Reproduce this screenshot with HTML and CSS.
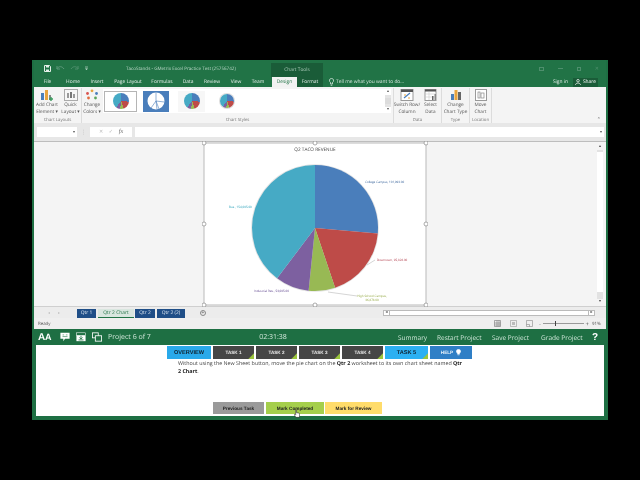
FILE: index.html
```html
<!DOCTYPE html>
<html lang="en">
<head>
<meta charset="utf-8">
<title>GMetrix Excel Practice Test</title>
<link rel="stylesheet" href="styles.css">
</head>
<body>
<div class="app">
  <section class="excel">
    <header class="titlebar">
      <div class="qat">
        <svg class="qat-save" viewBox="0 0 7 7"><path d="M.5.5h5l1 1v5h-6z" fill="none" stroke="#e4efe9"/><path d="M2 .5h3v2H2zM2 4.5h3v2H2z" fill="#e4efe9"/></svg>
        <svg class="qat-icon" viewBox="0 0 9 7"><path d="M1 3.500C3 1 6 1 8 4M1 1v3h3" fill="none" stroke="#5f9a7c"/></svg>
        <svg class="qat-icon" viewBox="0 0 9 7"><path d="M8 3.500C6 1 3 1 1 4M8 1v3H5" fill="none" stroke="#4e8f6d"/></svg>
        <svg class="qat-caret" viewBox="0 0 5 5"><path d="M1 1h3M1 2.500h3L2.500 4z" fill="#cfe3d8" stroke="none"/><path d="M1 1h3" stroke="#cfe3d8" stroke-width=".6"/></svg>
      </div>
      <div class="doc-title">TacoStands - GMetrix Excel Practice Test (25756742)</div>
      <div class="tools-tab">Chart Tools</div>
      <div class="win-controls">
        <span class="win-box"></span>
        <span class="win-min"></span>
        <span class="win-box win-max"></span>
        <span class="win-close">✕</span>
      </div>
    </header>
    <nav class="tabstrip">
      <div class="tabs">
        <span>File</span><span>Home</span><span>Insert</span><span>Page Layout</span><span>Formulas</span><span>Data</span><span>Review</span><span>View</span><span>Team</span><i></i><span class="tab-on">Design</span><span class="tab-format">Format</span>
      </div>
      <svg class="bulb" viewBox="0 0 5 8"><path d="M2.500.5a2 2 0 0 1 1 3.800V6h-2V4.300a2 2 0 0 1 1-3.800zM1.700 7.300h1.600" fill="none" stroke="#e8f1ec" stroke-width=".7"/></svg>
      <span class="tell">Tell me what you want to do...</span>
      <span class="signin">Sign in</span>
      <span class="share"><svg viewBox="0 0 7 7"><circle cx="3.500" cy="2" r="1.500" fill="none" stroke="#fff" stroke-width=".8"/><path d="M.5 7c0-3 6-3 6 0" fill="none" stroke="#fff" stroke-width=".8"/></svg>Share</span>
    </nav>
    <div class="ribbon">
      <div class="group group-layouts">
        <div class="group-body">
          <div class="rb rb-add">
            <svg class="rb-icon" viewBox="0 0 14 12"><rect x="1" y="4" width="3" height="7" fill="#4a7ebb"/><rect x="5" y="1" width="3" height="10" fill="#e8a33d"/><rect x="9" y="6" width="2" height="5" fill="#888"/><path d="M11 8v4M9 10h4" stroke="#3c9a5f" stroke-width="1.400"/></svg>
            <span>Add Chart<br>Element ▾</span>
          </div>
          <div class="rb rb-quick">
            <svg class="rb-icon" viewBox="0 0 14 12"><rect x=".5" y=".5" width="13" height="11" fill="#f7f7f7" stroke="#aaa"/><rect x="3" y="4" width="2" height="5" fill="#999"/><rect x="6" y="3" width="2" height="6" fill="#777"/><rect x="9" y="5" width="2" height="4" fill="#999"/></svg>
            <span>Quick<br>Layout ▾</span>
          </div>
        </div>
        <div class="caption">Chart Layouts</div>
      </div>
      <div class="group group-styles">
        <div class="group-body">
          <div class="rb rb-colors">
            <svg class="rb-icon" viewBox="0 0 14 12"><circle cx="7" cy="1.800" r="1.400" fill="#e8a33d"/><circle cx="2.500" cy="4.500" r="1.400" fill="#d9534f"/><circle cx="11.500" cy="4.500" r="1.400" fill="#4a7ebb"/><circle cx="3.500" cy="9" r="1.400" fill="#e26b3c"/><circle cx="10.500" cy="9" r="1.400" fill="#5ba55b"/></svg>
            <span>Change<br>Colors ▾</span>
          </div>
          <div class="gallery">
            <div class="thumb thumb-selected"><span class="mini-pie"></span></div>
            <div class="thumb thumb-blue">
              <svg viewBox="0 0 26 20"><circle cx="13" cy="10" r="8.500" fill="#fff"/><path d="M13 1.500V10l8.400 1M13 10l-5 7M13 10l1 8.500M13 10l3 8" stroke="#4a7ebb" stroke-width=".6" fill="none"/></svg>
            </div>
            <div class="thumb thumb-soft"><span class="mini-pie"></span></div>
            <div class="thumb thumb-dark"><span class="mini-pie mini-pie-dark"></span></div>
          </div>
          <div class="gallery-scroll"><span>▴</span><span class="gs-mid"></span><span>▾</span></div>
        </div>
        <div class="caption">Chart Styles</div>
      </div>
      <div class="group group-data">
        <div class="group-body">
          <div class="rb rb-switch">
            <svg class="rb-icon" viewBox="0 0 14 12"><rect x="1" y=".5" width="12" height="11" fill="#fff" stroke="#999"/><rect x="1" y=".5" width="12" height="2.500" fill="#555"/><path d="M4 9l6-5" stroke="#4a7ebb" stroke-width="1.200"/><path d="M4 6h2M8 9h2" stroke="#e8a33d"/></svg>
            <span>Switch Row/<br>Column</span>
          </div>
          <div class="rb rb-select">
            <svg class="rb-icon" viewBox="0 0 14 12"><rect x="1" y=".5" width="11" height="11" fill="#fff" stroke="#999"/><rect x="1" y=".5" width="11" height="2" fill="#555"/><path d="M1 5h11M1 8h11M5 3v8" stroke="#c9c9c9" stroke-width=".6"/><rect x="8" y="7" width="1.500" height="4" fill="#666"/><rect x="10.500" y="5" width="1.500" height="6" fill="#888"/></svg>
            <span>Select<br>Data</span>
          </div>
        </div>
        <div class="caption">Data</div>
      </div>
      <div class="group group-type">
        <div class="group-body">
          <div class="rb rb-type">
            <svg class="rb-icon" viewBox="0 0 14 12"><rect x="2" y="5" width="3" height="6" fill="#4a7ebb"/><rect x="5.500" y="1" width="3" height="10" fill="#e8a33d"/><rect x="9" y="3" width="3" height="8" fill="#666"/></svg>
            <span>Change<br>Chart Type</span>
          </div>
        </div>
        <div class="caption">Type</div>
      </div>
      <div class="group group-loc">
        <div class="group-body">
          <div class="rb rb-move">
            <svg class="rb-icon" viewBox="0 0 14 12"><rect x="1.500" y=".5" width="11" height="11" fill="#fff" stroke="#999"/><rect x="4" y="3" width="2" height="6" fill="none" stroke="#888" stroke-width=".7"/><rect x="7" y="4" width="3" height="5" fill="none" stroke="#888" stroke-width=".7"/></svg>
            <span>Move<br>Chart</span>
          </div>
        </div>
        <div class="caption">Location</div>
      </div>
      <span class="collapse">⌃</span>
    </div>
    <div class="formula">
      <div class="namebox"><span>▾</span></div>
      <span class="fdots">⋮</span>
      <div class="fbuttons"><span>✕</span><span>✓</span><em>fx</em></div>
      <div class="finput"><span>▾</span></div>
    </div>
    <div class="sheet">
      <svg class="chart" viewBox="0 0 226 166">
        <rect x="2" y="2" width="222" height="162" fill="#fff" stroke="#b9b9b9"/>
        <text class="chart-title" x="113" y="10" text-anchor="middle">Q2 TACO REVENUE</text>
        <circle cx="113" cy="87" r="63.800" fill="#e3e3e3"/>
        <path d="M113 87V24A63 63 0 0 1 175.800 92.500Z" fill="#4a7ebb"/>
        <path d="M113 87L175.800 92.500A63 63 0 0 1 133.100 146.700Z" fill="#be4b48"/>
        <path d="M113 87L133.100 146.700A63 63 0 0 1 106.600 149.700Z" fill="#98b954"/>
        <path d="M113 87L106.600 149.700A63 63 0 0 1 75.100 137.300Z" fill="#7d60a0"/>
        <path d="M113 87L75.100 137.300A63 63 0 0 1 113 24Z" fill="#46aac5"/>
        <path class="leader" d="M173 119L165 124"/>
        <path class="leader" d="M126 151L155 155"/>
        <text class="lbl lbl-blue" x="163" y="42">College Campus, 101,993.00</text>
        <text class="lbl lbl-red" x="175" y="120">Downtown, 95,828.00</text>
        <text class="lbl lbl-green" x="170" y="156" text-anchor="middle">High School Campus,</text>
        <text class="lbl lbl-green" x="170" y="160" text-anchor="middle">36,878.00</text>
        <text class="lbl lbl-purple" x="52" y="151">Industrial Rev., 53,695.00</text>
        <text class="lbl lbl-teal" x="27" y="67">Bus., 154,095.00</text>
        <g class="handles">
          <circle cx="2" cy="2" r="2"/><circle cx="113" cy="2" r="2"/><circle cx="224" cy="2" r="2"/>
          <circle cx="2" cy="83" r="2"/><circle cx="224" cy="83" r="2"/>
          <circle cx="2" cy="164" r="2"/><circle cx="113" cy="164" r="2"/><circle cx="224" cy="164" r="2"/>
        </g>
      </svg>
      <div class="vscroll"><span class="sb-btn">▴</span><span class="sb-thumb"></span><span class="sb-btn">▾</span></div>
    </div>
    <div class="sheet-tabs">
      <div class="tab-nav"><span>◂</span><span>▸</span></div>
      <span class="stab stab-q1">Qtr 1</span>
      <span class="stab stab-active">Qtr 2 Chart</span>
      <span class="stab stab-q2">Qtr 2</span>
      <span class="stab stab-q22">Qtr 2 (2)</span>
      <span class="add-sheet">+</span>
      <div class="hscroll"><span>◂</span><span class="hs-track"></span><span>▸</span></div>
    </div>
    <footer class="status">
      <span class="ready">Ready</span>
      <div class="views">
        <svg viewBox="0 0 7 7"><path d="M.5.5h6v6h-6zM.5 3h6M.5 5h6M3 .5v6M5 .5v6" fill="none" stroke="#777" stroke-width=".6"/></svg>
        <svg viewBox="0 0 7 7"><path d="M.5.5h6v6h-6z" fill="none" stroke="#999" stroke-width=".6"/><path d="M2 2h3v3H2z" fill="#bbb"/></svg>
        <svg viewBox="0 0 7 7"><path d="M.5.5h6v6h-6zM.5 4.500h3v2" fill="none" stroke="#888" stroke-width=".6"/></svg>
      </div>
      <div class="zoom-slider"><span class="z-sign">-</span><span class="z-track"><b></b></span><span class="z-sign">+</span></div>
      <span class="zoom-pct">91%</span>
    </footer>
  </section>
  <section class="bar">
    <span class="aa">A<small>A</small></span>
    <svg class="bar-icon bar-icon-first" viewBox="0 0 12 11"><path d="M.5.5h11v7H6l-2 3v-3H.5z" fill="#fff"/><path d="M3 3h2M7 3h2M3 5h6" stroke="#217346" stroke-width=".7"/></svg>
    <svg class="bar-icon" viewBox="0 0 12 11"><rect x=".5" y=".5" width="11" height="10" fill="#fff"/><rect x=".5" y=".5" width="11" height="3" fill="#217346" stroke="#fff" stroke-width=".5"/><path d="M6 4v4M4 6l2 2 2-2M3 9h6" fill="none" stroke="#217346"/></svg>
    <svg class="bar-icon" viewBox="0 0 12 11"><rect x=".5" y=".5" width="7" height="6" fill="none" stroke="#fff"/><rect x="4" y="4" width="7.500" height="6.500" fill="#217346" stroke="#fff"/></svg>
    <span class="progress">Project 6 of 7</span>
    <span class="timer">02:31:38</span>
    <span class="link link-summary">Summary</span>
    <span class="link link-restart">Restart Project</span>
    <span class="link link-save">Save Project</span>
    <span class="link link-grade">Grade Project</span>
    <span class="help-q">?</span>
  </section>
  <main class="panel">
    <div class="task-tabs">
      <span class="ttab ttab-over">OVERVIEW</span>
      <span class="ttab ttab-task">TASK 1<i></i></span>
      <span class="ttab ttab-task">TASK 2<i></i></span>
      <span class="ttab ttab-task">TASK 3<i></i></span>
      <span class="ttab ttab-task">TASK 4<i></i></span>
      <span class="ttab ttab-cur">TASK 5<i></i></span>
      <span class="ttab ttab-help">HELP
        <svg viewBox="0 0 6 8"><path d="M3 0a2.500 2.500 0 0 1 1.300 4.700V6H1.700V4.700A2.500 2.500 0 0 1 3 0zM1.900 7h2.200" fill="#fff" stroke="#fff" stroke-width=".5"/></svg>
      </span>
    </div>
    <p class="instructions">Without using the New Sheet button, move the pie chart on the <b>Qtr 2</b> worksheet to its own chart sheet named <b>Qtr 2 Chart</b>.</p>
    <div class="actions">
      <span class="act act-prev">Previous Task</span>
      <span class="act act-done">Mark Completed
        <svg class="cursor" viewBox="0 0 7 10"><path d="M2 .5c.6 0 1 .4 1 1V4l2.500.5c.7.2 1 .6 1 1.200V9.500H2L.5 6.500c-.2-.5.3-.9.8-.5l.7.700z" fill="#fff" stroke="#111" stroke-width=".6"/></svg>
      </span>
      <span class="act act-review">Mark for Review</span>
    </div>
  </main>
</div>
</body>
</html>
```

FILE: styles.css
```css
* { box-sizing: border-box; }
html, body { margin: 0; height: 100%; background: #000; }
body { font-family: "Open Sans", "Liberation Sans", sans-serif; color: #444; overflow: hidden; text-rendering: geometricPrecision; }

.app {
  margin: 60px 0 0 32px;
  width: 576px;
  height: 360px;
  padding: 0 1px 4px 2px;
  background: #1e6f43;
  display: flex;
  flex-direction: column;
  filter: blur(.4px);
}

.excel { height: 269px; margin-right: 1px; display: flex; flex-direction: column; background: #f2f2f2; }

/* title */
.titlebar { height: 17px; flex: none; display: flex; align-items: center; background: #217346; position: relative; }
.qat { width: 92px; padding-left: 10px; display: flex; align-items: center; gap: 5px; }
.qat-save { width: 7px; height: 7px; }
.qat-icon { width: 9px; height: 7px; }
.qat-caret { width: 5px; height: 5px; }
.doc-title { width: 111px; font-size: 4.550px; white-space: nowrap; color: #bcd7c8; }
.tools-tab { margin-left: 34px; width: 52px; align-self: flex-end; height: 14px; background: #1a5c38; color: #a9c9b7; font-size: 4.800px; display: flex; align-items: center; justify-content: center; }
.win-controls { margin-left: auto; margin-right: 7px; display: flex; align-items: center; gap: 14px; }
.win-box { width: 5px; height: 4px; border: 1px solid #4e8f6d; }
.win-min { width: 5px; height: 1px; background: #4e8f6d; }
.win-max { width: 4px; height: 4px; }
.win-close { font-size: 5px; color: #4e8f6d; }

/* tabs */
.tabstrip { height: 10px; flex: none; display: flex; align-items: center; background: #217346; color: #e8f1ec; font-size: 4.900px; }
.tabs { display: grid; grid-template-columns: 25px 26px 22px 40px 28px 24px 24px 24px 20px 4px 25px 26px; height: 100%; padding-left: 1px; }
.tabs span { display: flex; align-items: center; justify-content: center; white-space: nowrap; }
.tabs .tab-on { background: #f2f2f2; color: #217346; }
.tabs .tab-format { background: #1a5c38; }
.bulb { width: 5px; height: 8px; margin-left: 6px; }
.tell { margin-left: 2px; white-space: nowrap; color: #d5e5dc; }
.signin { margin-left: auto; white-space: nowrap; }
.share { width: 25px; height: 9px; margin: 0 8px 0 5px; background: #1a5c38; display: flex; align-items: center; justify-content: center; gap: 2px; color: #fff; }
.share svg { width: 6px; height: 6px; }

/* ribbon */
.ribbon { height: 36px; flex: none; display: flex; background: #f4f4f4; position: relative; color: #555; font-size: 4.700px; }
.group { display: flex; flex-direction: column; border-right: 1px solid #dcdcdc; margin-top: 1px; }
.group-body { flex: 1; display: flex; min-height: 0; }
.caption { height: 6px; line-height: 6px; text-align: center; font-size: 4.300px; color: #777; white-space: nowrap; }
.group-layouts { width: 48px; }
.group-styles { width: 312px; }
.group-data { width: 48px; }
.group-type { width: 28px; }
.group-loc { width: 22px; }
.rb { display: flex; flex-direction: column; align-items: center; text-align: center; line-height: 6.600px; white-space: nowrap; padding-top: 1px; }
.rb span { display: block; margin-top: 1px; }
.rb-icon { width: 14px; height: 12px; flex: none; }
.rb-add { width: 26px; }
.rb-quick { width: 21px; }
.rb-colors { width: 20px; }
.rb-switch { width: 26px; }
.rb-select { width: 21px; }
.rb-type { width: 27px; }
.rb-move { width: 21px; }
.gallery { width: 282px; height: 24px; margin-left: 1px; padding-left: 1px; margin-top: 1px; background: #fff; display: flex; align-items: center; }
.thumb { height: 21px; display: flex; align-items: center; justify-content: center; flex: none; }
.thumb-selected { width: 33px; border: 1px solid #b5b5b5; background: #fff; }
.thumb-blue { width: 26px; margin-left: 6px; background: #4a7ebb; }
.thumb-blue svg { width: 26px; height: 20px; }
.thumb-soft { width: 27px; margin-left: 9px; background: #f7f7f7; }
.thumb-dark { width: 26px; margin-left: 9px; }
.mini-pie { display: block; width: 16px; height: 16px; border-radius: 50%; background: conic-gradient(#4a7ebb 0 95deg, #be4b48 95deg 161deg, #98b954 161deg 186deg, #7d60a0 186deg 217deg, #46aac5 217deg); }
.mini-pie-dark { width: 14px; height: 14px; box-shadow: 0 0 0 1px #ddd; }
.gallery-scroll { width: 6px; height: 24px; margin-top: 1px; display: flex; flex-direction: column; justify-content: space-between; background: #e4e4e4; font-size: 4px; line-height: 6px; text-align: center; color: #555; }
.gallery-scroll span { height: 6px; background: #fff; }
.gallery-scroll .gs-mid { height: 6px; background: #dcdcdc; }
.collapse { position: absolute; right: 5px; bottom: 0; font-size: 5px; line-height: 6px; color: #666; }

/* formula */
.formula { height: 19px; flex: none; display: flex; align-items: center; background: #e7e7e7; padding: 0 2px 0 3px; border-bottom: 1px solid #bdbdbd; }
.namebox { width: 40px; height: 10px; background: #fff; display: flex; align-items: center; justify-content: flex-end; padding-right: 2px; font-size: 4px; color: #555; }
.fdots { width: 13px; text-align: center; font-size: 6px; color: #bbb; }
.fbuttons { width: 42px; height: 10px; background: #fff; display: flex; align-items: center; justify-content: space-around; padding: 0 6px; font-size: 5px; color: #bbb; }
.fbuttons em { color: #666; font-family: "Liberation Serif", serif; font-size: 6px; }
.finput { flex: 1; margin-left: 3px; height: 10px; background: #fff; display: flex; align-items: center; justify-content: flex-end; padding-right: 2px; font-size: 4px; color: #555; }

/* sheet */
.sheet { height: 164px; flex: none; position: relative; display: flex; background: #f4f4f4; padding-left: 166px; border-left: 2px solid #f4f4f4; }
.chart { width: 226px; height: 166px; margin-top: -1px; flex: none; }
.chart-title { font-size: 4.700px; fill: #444; font-family: "Open Sans", "Liberation Sans", sans-serif; }
.lbl { font-size: 3px; font-family: "Open Sans", "Liberation Sans", sans-serif; }
.lbl-blue { fill: #2f5c96; }
.lbl-red { fill: #b03a48; }
.lbl-green { fill: #8fa53b; }
.lbl-purple { fill: #5a3f8a; }
.lbl-teal { fill: #1c9bb5; }
.leader { fill: none; stroke: #aaa; stroke-width: .5; }
.handles circle { fill: #fff; stroke: #8a8a8a; stroke-width: .7; }
.vscroll { position: absolute; right: 3px; top: 2px; bottom: 1px; width: 6px; display: flex; flex-direction: column; background: #e2e2e2; font-size: 4px; line-height: 5px; text-align: center; color: #444; }
.sb-btn { height: 6px; flex: none; background: #f4f4f4; }
.sb-thumb { height: 140px; margin-top: 2px; background: #fff; }
.vscroll .sb-btn:last-child { margin-top: auto; }

/* sheet tabs */
.sheet-tabs { height: 12px; flex: none; display: flex; align-items: center; background: #ececec; font-size: 4.900px; padding-top: 1px; border-top: 1px solid #cfcfcf; }
.tab-nav { width: 43px; padding-left: 14px; display: flex; gap: 8px; font-size: 4px; color: #c0c0c0; }
.stab { height: 9px; display: flex; align-items: center; justify-content: center; background: #1f4e87; color: #dfe8f2; white-space: nowrap; flex: none; }
.stab-q1 { width: 19px; }
.stab-active { width: 36px; margin-left: 2px; background: #d9e6df; color: #217346; border-bottom: 1px solid #217346; }
.stab-q2 { width: 20px; margin-left: 1px; }
.stab-q22 { width: 28px; margin-left: 2px; }
.add-sheet { width: 6px; height: 6px; margin-left: 15px; border: 1px solid #888; border-radius: 50%; display: flex; align-items: center; justify-content: center; font-size: 5px; color: #666; }
.hscroll { width: 212px; height: 6px; margin-left: 177px; display: flex; font-size: 4px; line-height: 6px; text-align: center; color: #333; background: #fff; border: 1px solid #bbb; }
.hscroll span { width: 5px; line-height: 4px; }
.hscroll .hs-track { flex: 1; border-left: 1px solid #bbb; border-right: 1px solid #bbb; }

/* status */
.status { height: 11px; flex: none; display: flex; align-items: center; background: #efefef; font-size: 4.400px; color: #555; padding-left: 4px; }
.ready { width: 456px; }
.views { display: flex; gap: 9px; width: 45px; }
.views svg { width: 7px; height: 7px; flex: none; }
.zoom-slider { width: 50px; display: flex; align-items: center; gap: 2px; }
.z-sign { font-size: 6px; line-height: 6px; color: #444; }
.z-track { flex: 1; height: 1px; background: #999; position: relative; }
.z-track b { position: absolute; left: 12px; top: -2px; width: 1px; height: 5px; background: #444; }
.zoom-pct { margin-left: 3px; }

/* bar */
.bar { height: 16px; flex: none; display: flex; align-items: center; color: #cfe6d8; font-size: 6.500px; white-space: nowrap; }
.aa { width: 14px; margin-left: 4px; font-family: "Liberation Sans", sans-serif; font-weight: 700; font-size: 10px; letter-spacing: -.3px; color: #fff; flex: none; }
.aa small { font-size: 9px; }
.bar-icon { width: 10px; height: 10px; margin-left: 6px; flex: none; }
.bar-icon-first { margin-left: 8px; }
.progress { margin-left: 6px; width: 151px; flex: none; font-size: 7px; }
.timer { width: 28px; flex: none; text-align: center; font-size: 7px; }
.link { flex: none; text-align: center; }
.link-summary { margin-left: 111px; width: 29px; }
.link-restart { margin-left: 10px; width: 43px; }
.link-save { margin-left: 12px; width: 37px; }
.link-grade { margin-left: 12px; width: 41px; }
.help-q { margin-left: 10px; font-family: "Liberation Sans", sans-serif; font-weight: 700; font-size: 10px; color: #fff; }

/* panel */
.panel { height: 71px; flex: none; margin: 0 3px 0 2px; background: #fff; padding: 1px 0 0 131px; position: relative; }
.task-tabs { display: flex; height: 13px; font-family: "Liberation Sans", sans-serif; font-weight: 700; font-size: 4.600px; }
.ttab { display: flex; align-items: center; justify-content: center; position: relative; flex: none; overflow: hidden; }
.ttab-over { width: 44px; margin-right: 2px; background: #29a9ea; color: #10202c; font-size: 5.600px; }
.ttab-task { width: 41px; margin-right: 2px; background: #464646; color: #e8e8e8; }
.ttab-task i, .ttab-cur i { position: absolute; right: -4px; bottom: -4px; width: 8px; height: 8px; background: #9bc53d; transform: rotate(45deg); }
.ttab-cur { width: 43px; margin-right: 2px; background: #2cb0f2; color: #10202c; font-size: 5.600px; }
.ttab-help { width: 42px; background: #2f7fc6; color: #e8f2fa; gap: 3px; }
.ttab-help svg { width: 5px; height: 7px; }
.instructions { position: absolute; left: 142px; top: 14px; width: 287px; margin: 0; font-size: 5.350px; line-height: 8px; color: #444; }
.instructions b { color: #222; }
.actions { position: absolute; left: 177px; top: 57px; display: flex; font-family: "Liberation Sans", sans-serif; font-weight: 700; font-size: 4.700px; color: #222; }
.act { height: 12px; display: flex; align-items: center; justify-content: center; position: relative; white-space: nowrap; }
.act-prev { width: 51px; margin-right: 2px; background: #9a9a9a; }
.act-done { width: 58px; margin-right: 1px; background: #a5cf4c; }
.act-review { width: 57px; background: #ffdc6b; }
.cursor { position: absolute; left: 28px; top: 7px; width: 6px; height: 9px; }
```
